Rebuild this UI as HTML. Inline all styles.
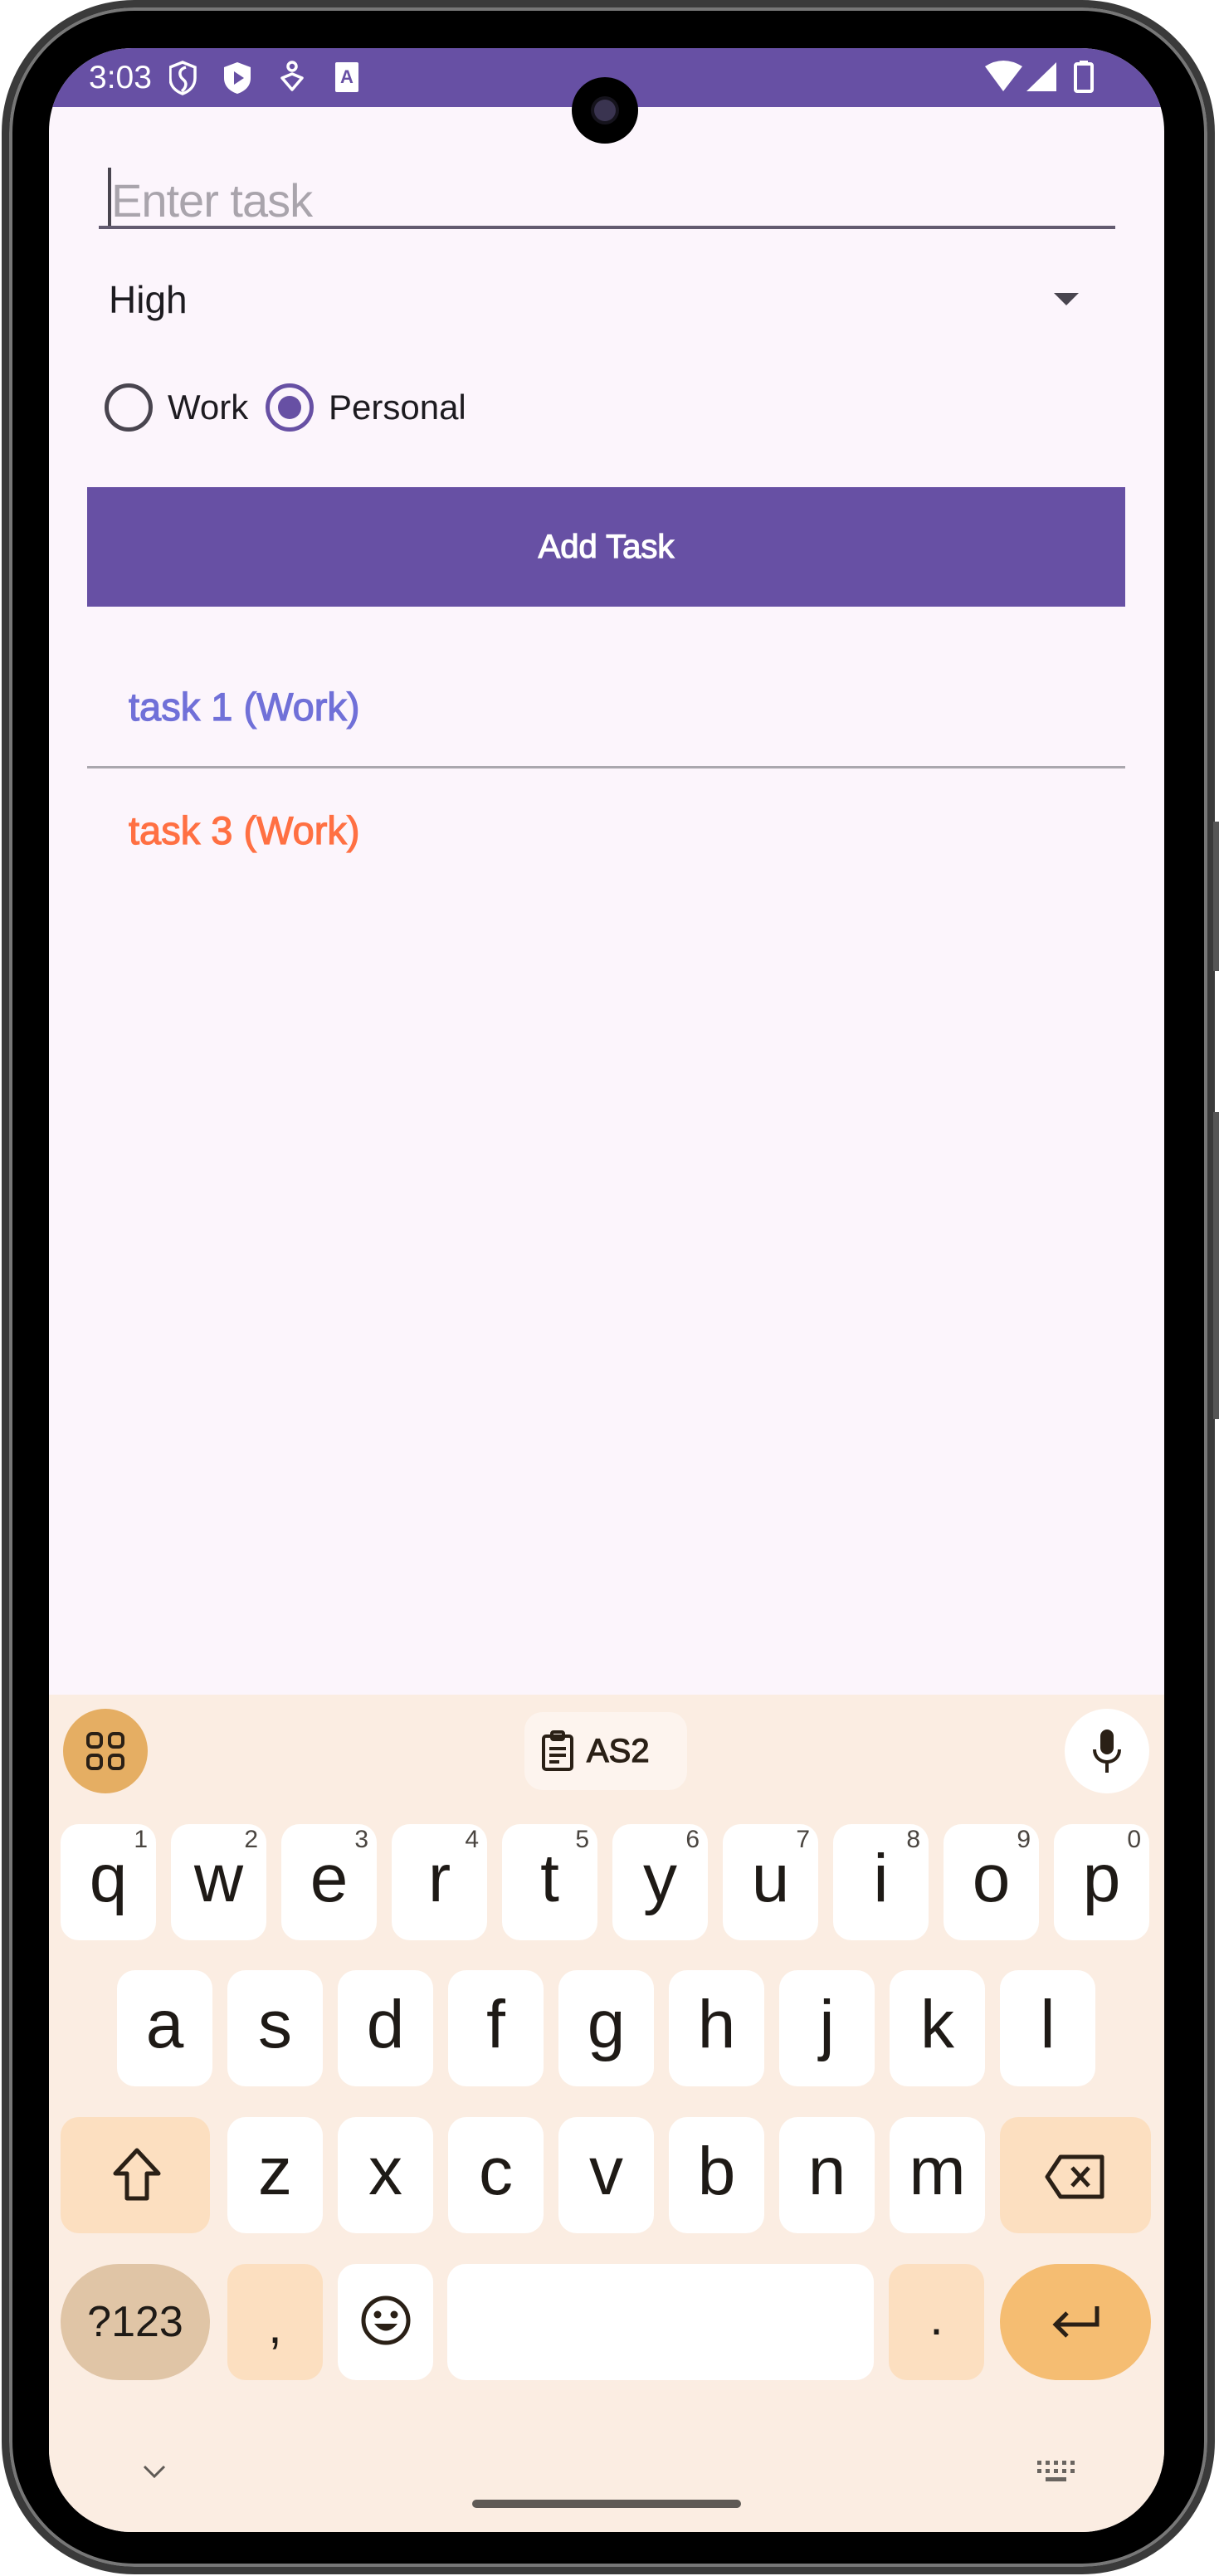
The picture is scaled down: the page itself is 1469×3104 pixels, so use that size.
<!DOCTYPE html>
<html><head><meta charset="utf-8"><style>
*{margin:0;padding:0;box-sizing:border-box}
body{width:1469px;height:3104px;background:#fff;position:relative;overflow:hidden;font-family:"Liberation Sans",sans-serif}
.frame{position:absolute;left:2px;top:0;width:1462px;height:3102px;border-radius:160px;background:#000;border:9px solid #3a3a3a;box-shadow:inset 0 0 0 4px #777}
.screen{position:absolute;left:59px;top:58px;width:1344px;height:2993px;border-radius:100px;background:#fcf5fc;overflow:hidden}
.abs{position:absolute}
.status{left:0;top:0;width:1344px;height:71px;background:#6750a4}
.key{position:absolute;background:#fff;border-radius:22px;height:140px;width:115px;color:#1e1a16;font-size:82px;text-align:center;line-height:132px}
.key sup{position:absolute;right:10px;top:4px;font-size:30px;line-height:30px;color:#4a4540}
.sp{background:#fcdfc0}
.med{-webkit-text-stroke:1.2px currentColor}
</style></head><body>
<div class="frame"></div>
<div class="abs" style="left:1462px;top:990px;width:7px;height:180px;background:#555"></div>
<div class="abs" style="left:1462px;top:1340px;width:7px;height:370px;background:#555"></div>
<div class="screen">
 <div class="abs status"></div>
 <div class="abs" style="left:48px;top:14px;color:#fff;font-size:39px;line-height:44px">3:03</div>
 <svg class="abs" style="left:145px;top:14px" width="240" height="44" viewBox="0 0 240 44">
  <path d="M16 3 L31 9 V22 C31 32 24 38 16 41 C8 38 1 32 1 22 V9 Z" fill="none" stroke="#fff" stroke-width="3.5"/>
  <path d="M20 9 C10 12 12 20 17 24 C22 28 20 34 15 38" fill="none" stroke="#fff" stroke-width="3.5"/>
  <path d="M82 3 L98 9 V22 C98 32 91 38 82 41 C73 38 66 32 66 22 V9 Z" fill="#fff"/>
  <path d="M78 14 L90 22 L78 30 Z" fill="#6750a4"/>
  <circle cx="148" cy="8" r="5" fill="none" stroke="#fff" stroke-width="3.5"/>
  <path d="M136 22 L148 17 L160 22 L148 36 Z" fill="none" stroke="#fff" stroke-width="3.5" stroke-linejoin="round"/>
  <rect x="200" y="3" width="28" height="36" rx="2" fill="#fff"/>
  <text x="206" y="28" font-size="22" font-weight="bold" fill="#6750a4" font-family="Liberation Sans">A</text>
 </svg>
 <svg class="abs" style="left:1128px;top:14px" width="140" height="44" viewBox="0 0 140 44">
  <path d="M0 8 Q22 -6 45 8 L22 38 Z" fill="#fff"/>
  <path d="M50 38 L86 3 V38 Z" fill="#fff"/>
  <rect x="109" y="5" width="20" height="33" rx="2" fill="none" stroke="#fff" stroke-width="4"/>
  <rect x="114" y="1" width="10" height="5" fill="#fff"/>
 </svg>
 <div class="abs" style="left:630px;top:35px;width:80px;height:80px;border-radius:50%;background:#000"></div>
 <div class="abs" style="left:657px;top:62px;width:26px;height:26px;border-radius:50%;background:#3a3450;box-shadow:0 0 0 4px #15131c"></div>
 <!-- input -->
 <div class="abs" style="left:71px;top:144px;width:4px;height:72px;background:#49454f"></div>
 <div class="abs" style="left:75px;top:150px;color:#a9a4ac;font-size:56px;line-height:68px;letter-spacing:-1px">Enter task</div>
 <div class="abs" style="left:60px;top:214px;width:1225px;height:4px;background:#635b70"></div>
 <div class="abs" style="left:72px;top:273px;color:#1d1b20;font-size:46px;line-height:60px">High</div>
 <div class="abs" style="left:1211px;top:295px;width:0;height:0;border-left:15px solid transparent;border-right:15px solid transparent;border-top:15px solid #49454f"></div>
 <!-- radios -->
 <div class="abs" style="left:67px;top:404px;width:58px;height:58px;border-radius:50%;border:5px solid #49454f"></div>
 <div class="abs" style="left:143px;top:405px;color:#1d1b20;font-size:42px;line-height:56px">Work</div>
 <div class="abs" style="left:261px;top:404px;width:58px;height:58px;border-radius:50%;border:5px solid #6750a4"></div>
 <div class="abs" style="left:276px;top:419px;width:28px;height:28px;border-radius:50%;background:#6750a4"></div>
 <div class="abs" style="left:337px;top:405px;color:#1d1b20;font-size:42px;line-height:56px">Personal</div>
 <!-- button -->
 <div class="abs med" style="left:46px;top:529px;width:1251px;height:144px;background:#6750a4;color:#fff;font-size:40px;line-height:144px;text-align:center">Add Task</div>
 <div class="abs med" style="left:96px;top:764px;color:#7070d8;font-size:47px;line-height:60px">task 1 (Work)</div>
 <div class="abs" style="left:46px;top:865px;width:1251px;height:3px;background:#aaa7ae"></div>
 <div class="abs med" style="left:96px;top:913px;color:#ff7043;font-size:47px;line-height:60px">task 3 (Work)</div>
 <!-- keyboard -->
 <div class="abs" style="left:0;top:1984px;width:1344px;height:1010px;background:#fbede2">
  <div class="abs" style="left:17px;top:17px;width:102px;height:102px;border-radius:50%;background:#e5ae63"></div>
  <svg class="abs" style="left:43px;top:43px" width="50" height="50" viewBox="0 0 50 50"><g fill="none" stroke="#2a2016" stroke-width="4"><rect x="4" y="4" width="16" height="16" rx="5"/><rect x="30" y="4" width="16" height="16" rx="5"/><rect x="4" y="30" width="16" height="16" rx="5"/><rect x="30" y="30" width="16" height="16" rx="5"/></g></svg>
  <div class="abs" style="left:573px;top:21px;width:196px;height:94px;border-radius:22px;background:#fdf4ee"></div>
  <svg class="abs" style="left:592px;top:43px" width="44" height="50" viewBox="0 0 44 50"><g fill="none" stroke="#2a2016" stroke-width="4"><rect x="4" y="7" width="34" height="40" rx="3"/><rect x="14" y="2" width="14" height="9" rx="2"/><path d="M11 22 H31 M11 30 H31 M11 38 H23"/></g></svg>
  <div class="abs med" style="left:648px;top:38px;font-size:40px;line-height:60px;color:#2a2016">AS2</div>
  <div class="abs" style="left:1224px;top:17px;width:102px;height:102px;border-radius:50%;background:#fff"></div>
  <svg class="abs" style="left:1255px;top:40px" width="40" height="56" viewBox="0 0 40 56"><rect x="12" y="2" width="16" height="30" rx="8" fill="#2a2016"/><path d="M5 26 C5 46 35 46 35 26 M20 40 V54" fill="none" stroke="#2a2016" stroke-width="4"/></svg>
  <!-- row1 -->
  <div class="key" style="left:14px;top:156px">q<sup>1</sup></div>
  <div class="key" style="left:147px;top:156px">w<sup>2</sup></div>
  <div class="key" style="left:280px;top:156px">e<sup>3</sup></div>
  <div class="key" style="left:413px;top:156px">r<sup>4</sup></div>
  <div class="key" style="left:546px;top:156px">t<sup>5</sup></div>
  <div class="key" style="left:679px;top:156px">y<sup>6</sup></div>
  <div class="key" style="left:812px;top:156px">u<sup>7</sup></div>
  <div class="key" style="left:945px;top:156px">i<sup>8</sup></div>
  <div class="key" style="left:1078px;top:156px">o<sup>9</sup></div>
  <div class="key" style="left:1211px;top:156px">p<sup>0</sup></div>
  <!-- row2 -->
  <div class="key" style="left:82px;top:332px">a</div>
  <div class="key" style="left:215px;top:332px">s</div>
  <div class="key" style="left:348px;top:332px">d</div>
  <div class="key" style="left:481px;top:332px">f</div>
  <div class="key" style="left:614px;top:332px">g</div>
  <div class="key" style="left:747px;top:332px">h</div>
  <div class="key" style="left:880px;top:332px">j</div>
  <div class="key" style="left:1013px;top:332px">k</div>
  <div class="key" style="left:1146px;top:332px">l</div>
  <!-- row3 -->
  <div class="key sp" style="left:14px;top:509px;width:180px"></div>
  <svg class="abs" style="left:76px;top:545px" width="60" height="66" viewBox="0 0 60 66"><path d="M30 4 L56 32 H42 V62 H18 V32 H4 Z" fill="none" stroke="#2a2016" stroke-width="5" stroke-linejoin="round"/></svg>
  <div class="key" style="left:215px;top:509px">z</div>
  <div class="key" style="left:348px;top:509px">x</div>
  <div class="key" style="left:481px;top:509px">c</div>
  <div class="key" style="left:614px;top:509px">v</div>
  <div class="key" style="left:747px;top:509px">b</div>
  <div class="key" style="left:880px;top:509px">n</div>
  <div class="key" style="left:1013px;top:509px">m</div>
  <div class="key sp" style="left:1146px;top:509px;width:182px"></div>
  <svg class="abs" style="left:1199px;top:553px" width="76" height="56" viewBox="0 0 76 56"><path d="M20 4 H70 V52 H20 L4 28 Z" fill="none" stroke="#2a2016" stroke-width="5" stroke-linejoin="round"/><path d="M34 17 L54 39 M54 17 L34 39" stroke="#2a2016" stroke-width="5"/></svg>
  <!-- row4 -->
  <div class="key" style="left:14px;top:686px;width:180px;border-radius:70px;background:#e0c5a6;font-size:52px;line-height:140px">?123</div>
  <div class="key sp" style="left:215px;top:686px;font-size:60px;line-height:150px">,</div>
  <div class="key" style="left:348px;top:686px"></div>
  <svg class="abs" style="left:375px;top:723px" width="62" height="62" viewBox="0 0 62 62"><circle cx="31" cy="31" r="27" fill="none" stroke="#2a2016" stroke-width="5"/><circle cx="21" cy="24" r="4.5" fill="#2a2016"/><circle cx="41" cy="24" r="4.5" fill="#2a2016"/><path d="M17 35 Q31 52 45 35 Z" fill="#2a2016"/></svg>
  <div class="key" style="left:480px;top:686px;width:514px"></div>
  <div class="key sp" style="left:1012px;top:686px;font-size:60px;line-height:130px">.</div>
  <div class="key" style="left:1146px;top:686px;width:182px;border-radius:70px;background:#f5bd72"></div>
  <svg class="abs" style="left:1207px;top:735px" width="60" height="44" viewBox="0 0 60 44"><path d="M56 2 V24 H6 M20 10 L6 24 L20 38" fill="none" stroke="#2a2016" stroke-width="5"/></svg>
  <!-- bottom -->
  <svg class="abs" style="left:112px;top:927px" width="30" height="20" viewBox="0 0 30 20"><path d="M3 3 L15 15 L27 3" fill="none" stroke="#5f5a55" stroke-width="3"/></svg>
  <svg class="abs" style="left:1191px;top:923px" width="46" height="26" viewBox="0 0 46 26"><g fill="#6a6560"><rect x="0" y="0" width="5" height="5"/><rect x="10" y="0" width="5" height="5"/><rect x="20" y="0" width="5" height="5"/><rect x="30" y="0" width="5" height="5"/><rect x="40" y="0" width="5" height="5"/><rect x="0" y="10" width="5" height="5"/><rect x="10" y="10" width="5" height="5"/><rect x="20" y="10" width="5" height="5"/><rect x="30" y="10" width="5" height="5"/><rect x="40" y="10" width="5" height="5"/><rect x="10" y="20" width="25" height="5"/></g></svg>
  <div class="abs" style="left:510px;top:970px;width:324px;height:10px;border-radius:5px;background:#5f5a55"></div>
 </div>
</div>
</body></html>
